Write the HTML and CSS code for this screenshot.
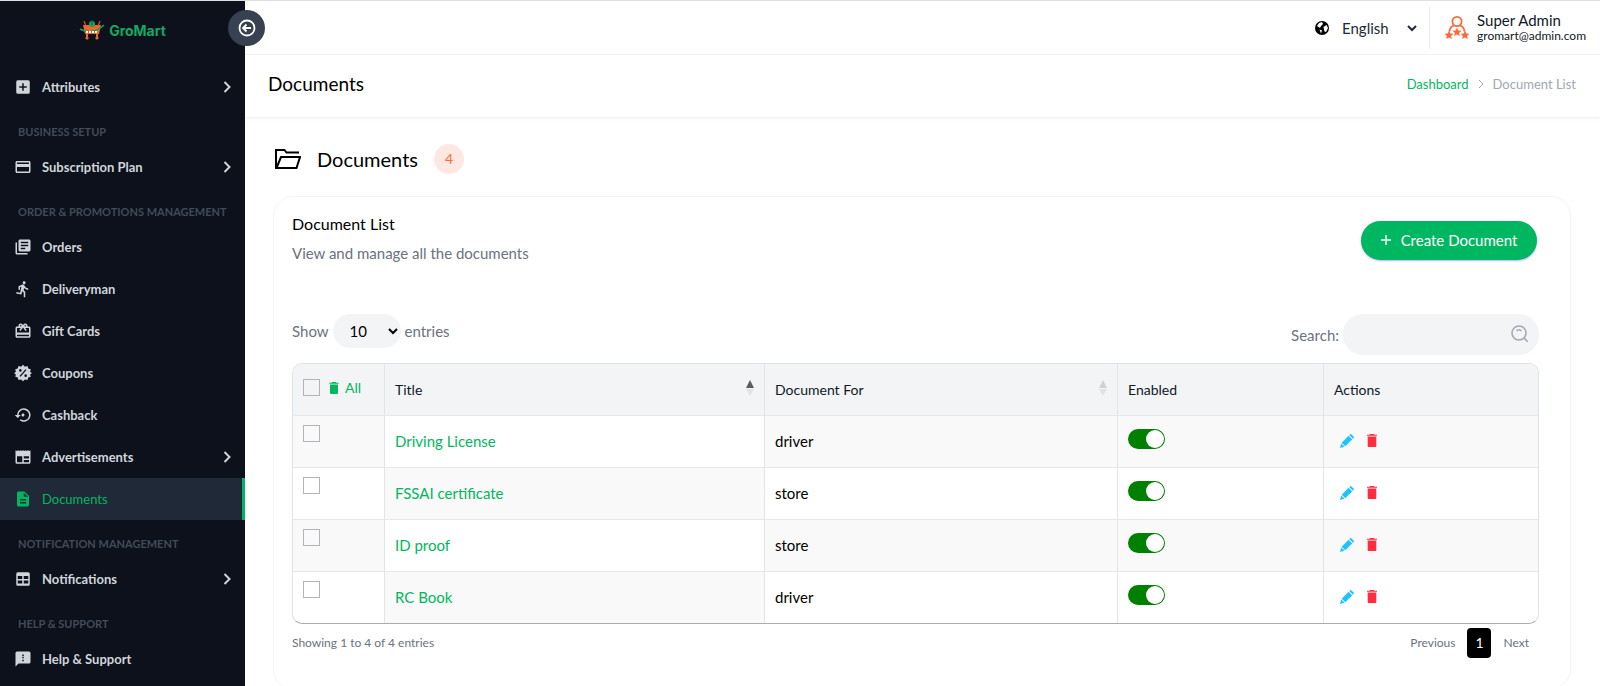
FILE: index.html
```html
<!DOCTYPE html>
<html lang="en">
	<head>
		<meta charset="UTF-8">
		<title>Documents</title>
		<link rel="stylesheet" href="styles.css">
	</head>
	<body>
		<!-- shared icons -->
		<svg class="sprite">
			<symbol id="chevron" viewBox="0 0 8 12"><path d="M1.5 1l5 5-5 5" fill="none" stroke="currentColor" stroke-width="2"/></symbol>
			<symbol id="pencil" viewBox="0 0 14 14"><path d="M8.600 1.800l3.600 3.600-6.900 6.900-3.600-3.600z M9.300 1.100l.8-.8q.6-.6 1.200 0l2.400 2.400q.6.600 0 1.200l-.8.800z M1.200 9.400L4.600 12.800 0 14z"/></symbol>
			<symbol id="trash" viewBox="0 0 10 13"><path d="M3 0h4l.6.7H10v1.100H0V.7h2.400z"/><path d="M.7 2.600h8.600V12q0 1-1 1H1.700q-1 0-1-1z"/></symbol>
		</svg>
		<div class="app">
			<aside class="sidebar">
				<a class="logo" href="#">
					<svg width="26" height="20" viewBox="0 0 26 20">
						<path d="M4 5h18l-2 9H6z" fill="#f0642d"/>
						<path d="M5 1l2 5M21 1l-2 5" stroke="#d9532b" stroke-width="1.2"/>
						<path d="M1 9q12 7 24-4" fill="none" stroke="#14a05a" stroke-width="1.6"/>
						<path d="M7 12h12" stroke="#fff" stroke-width="2" stroke-dasharray="2 1"/>
						<circle cx="13" cy="4" r="3" fill="#14a05a"/>
						<path d="M13 0v5" stroke="#0a6b3b"/>
						<path d="M8 14v4M18 14v4" stroke="#f0642d" stroke-width="2"/>
						<circle cx="8" cy="18" r="1.6" fill="#f0642d"/><circle cx="18" cy="18" r="1.6" fill="#f0642d"/>
					</svg>
					<span>GroMart</span>
				</a>
				<nav>
					<a class="item" href="#">
						<svg class="icon" viewBox="0 0 24 24"><path fill-rule="evenodd" d="M5 3h14a2 2 0 0 1 2 2v14a2 2 0 0 1-2 2H5a2 2 0 0 1-2-2V5a2 2 0 0 1 2-2zm6 4v4H7v2h4v4h2v-4h4v-2h-4V7z"/></svg>
						<span>Attributes</span><svg class="arrow"><use href="#chevron"/></svg>
					</a>
					<h6>BUSINESS SETUP</h6>
					<a class="item" href="#">
						<svg class="icon" viewBox="0 0 24 24"><path d="M20 4H4c-1.1 0-2 .9-2 2v12c0 1.1.9 2 2 2h16c1.1 0 2-.9 2-2V6c0-1.1-.9-2-2-2zm0 14H4v-6h16v6zm0-10H4V6h16v2z"/></svg>
						<span>Subscription Plan</span><svg class="arrow"><use href="#chevron"/></svg>
					</a>
					<h6>ORDER &amp; PROMOTIONS MANAGEMENT</h6>
					<a class="item" href="#">
						<svg class="icon" viewBox="0 0 24 24"><path d="M4 6H2v14c0 1.1.9 2 2 2h14v-2H4V6zm16-4H8c-1.1 0-2 .9-2 2v12c0 1.1.9 2 2 2h12c1.1 0 2-.9 2-2V4c0-1.1-.9-2-2-2zm-1 9H9V9h10v2zm-4 4H9v-2h6v2zm4-8H9V5h10v2z"/></svg>
						<span>Orders</span>
					</a>
					<a class="item" href="#">
						<svg class="icon" viewBox="0 0 24 24"><path d="M13.5 5.5c1.1 0 2-.9 2-2s-.9-2-2-2-2 .9-2 2 .9 2 2 2zM9.9 19.4l1-4.4 2.1 2v6h2v-7.500l-2.100-2 .6-3C14.800 12 16.800 13 19 13v-2c-1.900 0-3.500-1-4.300-2.400l-1-1.600c-.4-.6-1-1-1.700-1-.3 0-.5.1-.8.1L6 8.300V13h2V9.600l1.800-.7L8.200 17l-4.900-1-.4 2 7 1.400z"/></svg>
						<span>Deliveryman</span>
					</a>
					<a class="item" href="#">
						<svg class="icon" viewBox="0 0 24 24"><path d="M20 6h-2.180c.11-.31.18-.65.18-1 0-1.660-1.340-3-3-3-1.050 0-1.960.54-2.500 1.350l-.5.670-.5-.680C10.960 2.540 10.050 2 9 2 7.340 2 6 3.340 6 5c0 .35.070.69.180 1H4c-1.110 0-1.990.89-1.990 2L2 19c0 1.110.89 2 2 2h16c1.110 0 2-.89 2-2V8c0-1.110-.89-2-2-2zm-5-2c.55 0 1 .45 1 1s-.45 1-1 1-1-.45-1-1 .45-1 1-1zM9 4c.55 0 1 .45 1 1s-.45 1-1 1-1-.45-1-1 .45-1 1-1zm11 15H4v-2h16v2zm0-5H4V8h5.080L7 10.830 8.620 12 12 7.400l3.380 4.600L17 10.830 14.920 8H20v6z"/></svg>
						<span>Gift Cards</span>
					</a>
					<a class="item" href="#">
						<svg class="icon" viewBox="0 0 24 24"><path d="M12 1l2.600 2.500L18 2.800l1 3.300 3.300 1-.8 3.400L24 12l-2.500 2 .8 3-3.300 1-1 3.300-3.400-.8L12 23l-2.500-2.500-3.500.8L5 18l-3.300-1 .8-3L0 12l2.500-1.500-.8-3.400 3.300-1 1-3.300 3.400.7z"/><path d="M8 16.500l8-9" stroke="#0c111b" stroke-width="1.800"/><circle cx="8.500" cy="8.500" r="1.700" fill="#0c111b"/><circle cx="15.500" cy="15.500" r="1.700" fill="#0c111b"/></svg>
						<span>Coupons</span>
					</a>
					<a class="item" href="#">
						<svg class="icon" viewBox="0 0 24 24"><path d="M14 12c0-1.100-.9-2-2-2s-2 .9-2 2 .9 2 2 2 2-.9 2-2zm-1-9a9 9 0 0 0-9 9H1l4 4 4-4H6a7 7 0 1 1 2.900 5.700l-1.400 1.400A9 9 0 1 0 13 3z"/></svg>
						<span>Cashback</span>
					</a>
					<a class="item" href="#">
						<svg class="icon" viewBox="0 0 24 24"><path fill-rule="evenodd" d="M2 3l1.700 1 1.600-1L7 4l1.700-1 1.600 1L12 3l1.700 1 1.600-1L17 4l1.700-1 1.600 1L22 3v16a2 2 0 0 1-2 2H4a2 2 0 0 1-2-2zm2 8v8h7v-8zm9 0v3h7v-3zm0 5v3h7v-3z"/></svg>
						<span>Advertisements</span><svg class="arrow"><use href="#chevron"/></svg>
					</a>
					<a class="item active" href="#">
						<svg class="icon" viewBox="0 0 24 24"><path d="M14 2H6c-1.100 0-2 .9-2 2v16c0 1.100.9 2 2 2h12c1.100 0 2-.9 2-2V8l-6-6zm2 16H8v-2h8v2zm0-4H8v-2h8v2zm-3-5V3.500L18.500 9H13z"/></svg>
						<span>Documents</span>
					</a>
					<h6>NOTIFICATION MANAGEMENT</h6>
					<a class="item" href="#">
						<svg class="icon" viewBox="0 0 24 24"><path fill-rule="evenodd" d="M5 3h14a2 2 0 0 1 2 2v14a2 2 0 0 1-2 2H5a2 2 0 0 1-2-2V5a2 2 0 0 1 2-2zm0 5v4h6V8zm8 0v4h6V8zm-8 6v4h6v-4zm8 0v4h6v-4z"/></svg>
						<span>Notifications</span><svg class="arrow"><use href="#chevron"/></svg>
					</a>
					<h6>HELP &amp; SUPPORT</h6>
					<a class="item" href="#">
						<svg class="icon" viewBox="0 0 24 24"><path fill-rule="evenodd" d="M4 2h16a2 2 0 0 1 2 2v12a2 2 0 0 1-2 2H6l-4 4V4a2 2 0 0 1 2-2zm7 4v2h2V6zm0 3v2h2V9zm0 4v2h2v-2z"/></svg>
						<span>Help &amp; Support</span>
					</a>
				</nav>
			</aside>
			<button class="collapse" aria-label="Collapse menu">
				<svg width="18" height="18" viewBox="0 0 18 18" fill="none" stroke="#fff" stroke-width="1.800"><circle cx="9" cy="9" r="7.500"/><path d="M13 9H5.500M8.500 5.500L5 9l3.500 3.500"/></svg>
			</button>

			<div class="main">
				<header class="topbar">
					<svg class="globe" width="14" height="14" viewBox="0 0 14 14"><circle cx="7" cy="7" r="7"/><path d="M4 2l3-1 1 2-2 2-1 2-3-2zM8.500 6l3-2 1.500 3-2 4-1.500-.500L9 8.500zM4.500 8.500L7 9.500 6 12.500z" fill="#fff"/></svg>
					<select class="lang" aria-label="Language"><option>English</option></select>
					<div class="user">
						<svg width="24" height="26" viewBox="0 0 24 26">
							<g fill="none" stroke="#ff683a" stroke-width="1.800"><circle cx="12" cy="6.500" r="4.600"/><path d="M4.500 16.500Q5 11.500 9 10.500M19.500 16.500Q19 11.500 15 10.500"/></g>
							<g fill="#ff683a"><path id="star" d="M12 12.500l1.300 3 3.200.3-2.400 2.100.7 3.200-2.800-1.600-2.800 1.600.7-3.200-2.400-2.100 3.200-.3z"/><use href="#star" x="-8" y="3"/><use href="#star" x="8" y="3"/></g>
						</svg>
						<div>
							<div class="name">Super Admin</div>
							<div class="mail">gromart@admin.com</div>
						</div>
					</div>
				</header>

				<div class="page-title">
					<h3>Documents</h3>
					<div class="crumbs">
						<a href="#">Dashboard</a>
						<svg width="6" height="10" viewBox="0 0 6 10"><path d="M1 1l4 4-4 4" fill="none" stroke="#a0a7b1"/></svg>
						<span>Document List</span>
					</div>
				</div>

				<div class="content">
					<div class="heading">
						<svg width="26" height="20" viewBox="0 0 26 20" fill="none" stroke="#000" stroke-width="2"><path d="M24 3.500H11.500L9.500 1H1v18h20.500L25 8H6L1.500 19"/></svg>
						<h2>Documents</h2>
						<span class="count">4</span>
					</div>

					<section class="card">
						<div class="card-head">
							<div>
								<h4>Document List</h4>
								<p>View and manage all the documents</p>
							</div>
							<button class="create"><svg width="10" height="10" viewBox="0 0 10 10"><path d="M5 0v10M0 5h10" stroke="#fff" stroke-width="1.400"/></svg>Create Document</button>
						</div>

						<div class="tools">
							<label class="length">Show <select><option>10</option></select> entries</label>
							<label class="search">Search:
								<span class="search-box">
									<input type="search">
									<svg width="18" height="18" viewBox="0 0 18 18" fill="none" stroke="#a3a9b3" stroke-width="1.600"><circle cx="8" cy="8" r="7"/><path d="M13 13l3.800 3.800M5.500 6Q8 3.500 10.500 6"/></svg>
								</span>
							</label>
						</div>

						<div class="table-wrap">
							<table>
								<colgroup><col class="c-check"><col class="c-title"><col class="c-for"><col class="c-enabled"><col></colgroup>
								<thead>
									<tr>
										<th><div class="all"><input type="checkbox" aria-label="Select all"><a href="#"><svg width="10" height="12"><use href="#trash"/></svg>All</a></div></th>
										<th><div class="sort asc">Title<i></i></div></th>
										<th><div class="sort">Document For<i></i></div></th>
										<th>Enabled</th>
										<th>Actions</th>
									</tr>
								</thead>
								<tbody>
									<tr>
										<td class="check"><input type="checkbox" aria-label="Driving License"></td>
										<td><a href="#">Driving License</a></td>
										<td>driver</td>
										<td class="switch"><input type="checkbox" aria-label="Enabled" checked></td>
										<td><div class="actions"><a href="#" class="edit" aria-label="Edit"><svg width="14" height="14"><use href="#pencil"/></svg></a><a href="#" class="del" aria-label="Delete"><svg width="10" height="13"><use href="#trash"/></svg></a></div></td>
									</tr>
									<tr>
										<td class="check"><input type="checkbox" aria-label="FSSAI certificate"></td>
										<td><a href="#">FSSAI certificate</a></td>
										<td>store</td>
										<td class="switch"><input type="checkbox" aria-label="Enabled" checked></td>
										<td><div class="actions"><a href="#" class="edit" aria-label="Edit"><svg width="14" height="14"><use href="#pencil"/></svg></a><a href="#" class="del" aria-label="Delete"><svg width="10" height="13"><use href="#trash"/></svg></a></div></td>
									</tr>
									<tr>
										<td class="check"><input type="checkbox" aria-label="ID proof"></td>
										<td><a href="#">ID proof</a></td>
										<td>store</td>
										<td class="switch"><input type="checkbox" aria-label="Enabled" checked></td>
										<td><div class="actions"><a href="#" class="edit" aria-label="Edit"><svg width="14" height="14"><use href="#pencil"/></svg></a><a href="#" class="del" aria-label="Delete"><svg width="10" height="13"><use href="#trash"/></svg></a></div></td>
									</tr>
									<tr>
										<td class="check"><input type="checkbox" aria-label="RC Book"></td>
										<td><a href="#">RC Book</a></td>
										<td>driver</td>
										<td class="switch"><input type="checkbox" aria-label="Enabled" checked></td>
										<td><div class="actions"><a href="#" class="edit" aria-label="Edit"><svg width="14" height="14"><use href="#pencil"/></svg></a><a href="#" class="del" aria-label="Delete"><svg width="10" height="13"><use href="#trash"/></svg></a></div></td>
									</tr>
								</tbody>
							</table>
						</div>

						<div class="table-foot">
							<span>Showing 1 to 4 of 4 entries</span>
							<div class="pages">
								<a href="#">Previous</a>
								<a href="#" class="current">1</a>
								<a href="#">Next</a>
							</div>
						</div>
					</section>
				</div>
			</div>
		</div>
	</body>
</html>
```
FILE: styles.css
```css
*{
	box-sizing: border-box;
}
body,h2,h3,h4,h6,p{
	margin: 0;
}
body{
	font-family: Lato, "Liberation Sans", sans-serif;
	font-size: 15px;
	color: #111827;
	background: #fff;
}
a{
	color: #00b761;
	text-decoration: none;
}
button,input,select{
	font: inherit;
	border: none;
	margin: 0;
}
svg{
	display: block;
	flex: none;
}
.sprite{
	display: none;
}
.app{
	position: relative;
	display: flex;
	height: 100vh;
	overflow: hidden;
	border-top: 1px solid #dfe1e1;
}

/* sidebar */
.sidebar{
	flex: none;
	width: 245px;
	background: #0c111b;
	overflow: hidden;
}
.logo{
	display: flex;
	align-items: center;
	justify-content: center;
	gap: 4px;
	height: 58px;
	margin-bottom: 7px;
	font: bold 14px Inter, sans-serif;
	color: #14a862;
}
.item{
	display: flex;
	align-items: center;
	gap: 10px;
	height: 42px;
	padding: 0 14px;
	font-size: 13px;
	font-weight: bold;
	color: #d1d5db;
}
.item span{
	flex: 1;
	padding-bottom: 1px;
}
.icon{
	width: 18px;
	height: 18px;
	fill: currentColor;
}
.arrow{
	width: 8px;
	height: 12px;
}
.active{
	background: #1f2937;
	border-right: 3px solid #00b761;
	color: #00b761;
	font-weight: normal;
}
.sidebar h6{
	padding: 16px 18px 6px;
	font-size: 11px;
	line-height: 16px;
	color: #414b5a;
	white-space: nowrap;
}
.collapse{
	position: absolute;
	left: 228px;
	top: 9px;
	display: flex;
	align-items: center;
	justify-content: center;
	width: 37px;
	height: 36px;
	padding: 0;
	border-radius: 50%;
	background: #374151;
}

/* top bars */
.main{
	flex: 1;
	min-width: 0;
	overflow: hidden;
}
.topbar{
	display: flex;
	align-items: center;
	justify-content: flex-end;
	height: 54px;
	padding-right: 14px;
	border-bottom: 1px solid #f5f5f5;
}
.lang{
	width: 82px;
	margin: 0 9px 0 9px;
	background: none;
	color: #1f2937;
}
.user{
	display: flex;
	align-items: center;
	gap: 8px;
	height: 42px;
	padding-left: 15px;
	border-left: 1px solid #e5e7eb;
}
.name{
	line-height: 17px;
}
.mail{
	font-size: 12px;
	line-height: 14px;
}
.page-title{
	display: flex;
	align-items: center;
	justify-content: space-between;
	height: 62px;
	padding: 0 24px 5px 23px;
	box-shadow: 0 1px 3px rgba(0,0,0,.08);
}
.page-title h3{
	font-size: 19px;
	font-weight: normal;
	color: #000;
}
.crumbs{
	display: flex;
	align-items: center;
	gap: 9px;
	font-size: 13px;
	color: #a0a7b1;
}

/* content */
.content{
	padding: 27px 29px 30px 28px;
}
.heading{
	display: flex;
	align-items: center;
	gap: 16px;
	padding-left: 2px;
	margin-bottom: 22px;
	color: #000;
}
.heading h2{
	font-size: 20px;
	font-weight: normal;
}
.count{
	width: 30px;
	border-radius: 50%;
	background: #ffe8e2;
	color: #ff683a;
	font-size: 14px;
	line-height: 30px;
	text-align: center;
}
.card{
	padding: 17px 31px 30px 18px;
	border: 1px solid #f3f4f6;
	border-radius: 20px;
}
.card-head{
	display: flex;
	justify-content: space-between;
	margin-bottom: 50px;
	padding-right: 2px;
}
.card-head h4{
	font-size: 16px;
	line-height: 20px;
	font-weight: normal;
	color: #000;
}
.card-head p{
	margin-top: 8px;
	line-height: 22px;
	color: #6b7280;
}
.create{
	display: flex;
	align-items: center;
	justify-content: center;
	gap: 10px;
	width: 176px;
	height: 39px;
	margin-top: 7px;
	padding-bottom: 3px;
	border-radius: 20px;
	background: #00b761;
	color: #fff;
	box-shadow: 0 1px 2px rgba(80,60,220,.4);
}
.tools{
	display: flex;
	justify-content: space-between;
	margin-bottom: 8px;
	color: #6b7280;
}
.length,.search{
	display: flex;
	align-items: center;
	gap: 4px;
}
.length{
	height: 34px;
}
.length select{
	width: 68px;
	height: 34px;
	padding: 0 0 0 13px;
	border-radius: 17px;
	background: #f3f4f6;
	color: #000;
}
.search-box{
	position: relative;
}
.search-box input{
	display: block;
	width: 196px;
	height: 41px;
	padding: 0 40px 0 16px;
	border-radius: 20px;
	background: #f3f4f6;
}
.search-box svg{
	position: absolute;
	right: 10px;
	top: 11px;
}

/* table */
.table-wrap{
	border: 1px solid #dfe2e6;
	border-bottom-color: #a9abad;
	border-radius: 10px;
	overflow: hidden;
}
table{
	width: 100%;
	table-layout: fixed;
	border-spacing: 0;
}
.c-check{
	width: 92px;
}
.c-title{
	width: 380px;
}
.c-for{
	width: 353px;
}
.c-enabled{
	width: 206px;
}
th,td{
	height: 52px;
	padding: 0 10px;
	border-right: 1px solid #e2e4e9;
	border-bottom: 1px solid #e5e7eb;
	text-align: left;
	font-weight: normal;
	color: #000;
}
th{
	background: #f3f4f6;
	color: #111827;
	font-size: 14px;
}
td{
	padding-bottom: 2px;
}
th:last-child,td:last-child{
	border-right: none;
}
tbody tr:last-child td{
	height: 51px;
	border-bottom: none;
}
tbody tr:nth-child(odd) td,
tbody tr:nth-child(even) td:nth-child(2){
	background: #f9f9f9;
}
tbody tr:nth-child(odd) td:nth-child(2){
	background: #fff;
}
.all input,.check input{
	appearance: none;
	display: block;
	width: 17px;
	height: 17px;
	border: 1px solid #b1b5ba;
}
.check{
	padding-top: 9px;
	vertical-align: top;
}
.all,.all a{
	display: flex;
	align-items: center;
	gap: 9px;
}
.all{
	padding-bottom: 4px;
}
.all a{
	gap: 6px;
}
.all svg,.edit svg,.del svg{
	fill: currentColor;
}
.sort{
	display: flex;
	align-items: center;
	justify-content: space-between;
}
.sort i{
	display: grid;
	gap: 1px;
	padding-bottom: 4px;
}
.sort i:before,.sort i:after{
	content: "";
	border: 4px solid transparent;
}
.sort i:before{
	border-top: 0;
	border-bottom: 8px solid #d0d1d3;
}
.sort i:after{
	border-bottom: 0;
	border-top: 7px solid #e2e3e5;
}
.asc i:before{
	border-bottom-color: #5c5d5e;
}
.switch input{
	appearance: none;
	display: flex;
	width: 37px;
	height: 20px;
	margin-bottom: 4px;
	padding: 1px;
	border-radius: 10px;
	background: green;
}
.switch input:before{
	content: "";
	width: 18px;
	height: 18px;
	border-radius: 50%;
	background: #fff;
}
.switch input:checked:before{
	margin-left: auto;
}
.actions{
	display: flex;
	align-items: center;
	gap: 13px;
	padding-left: 6px;
}
.edit{
	color: #1fc3ff;
}
.del{
	color: #ff2d3d;
}
.table-foot{
	display: flex;
	align-items: flex-start;
	justify-content: space-between;
	padding-top: 4px;
	font-size: 12px;
	line-height: 30px;
	color: #6b7280;
}
.pages{
	display: flex;
	gap: 12px;
	padding-right: 10px;
}
.pages a{
	color: #6b7280;
}
.pages .current{
	width: 24px;
	border-radius: 4px;
	background: #000;
	color: #fff;
	font-size: 14px;
	text-align: center;
}
```
